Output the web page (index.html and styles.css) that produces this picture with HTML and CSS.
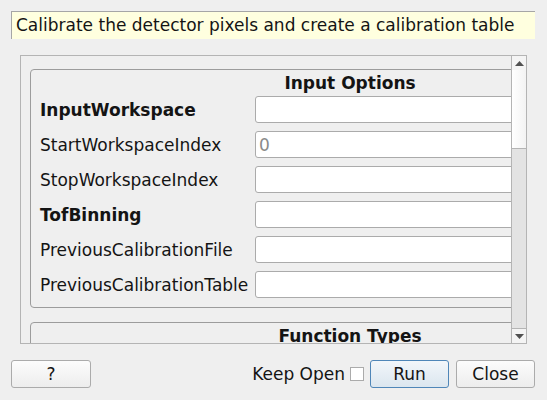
FILE: index.html
```html
<!DOCTYPE html>
<html>
<head>
<meta charset="utf-8">
<link rel="stylesheet" href="styles.css">
</head>
<body>
<div class="desc">Calibrate the detector pixels and create a calibration table</div>
<div class="scroll">
  <div class="viewport">
    <div class="content">
      <div class="group">
        <div class="group-title">Input Options</div>
        <div class="rows">
          <div class="row"><span class="label bold">InputWorkspace</span><div class="field"></div></div>
          <div class="row"><span class="label">StartWorkspaceIndex</span><div class="field"><span class="ph">0</span></div></div>
          <div class="row"><span class="label">StopWorkspaceIndex</span><div class="field"></div></div>
          <div class="row"><span class="label bold">TofBinning</span><div class="field"></div></div>
          <div class="row"><span class="label">PreviousCalibrationFile</span><div class="field"></div></div>
          <div class="row"><span class="label">PreviousCalibrationTable</span><div class="field"></div></div>
        </div>
      </div>
      <div class="group group2">
        <div class="group-title">Function Types</div>
      </div>
    </div>
  </div>
  <div class="vbar">
    <div class="arrow up"><svg width="9" height="5" viewBox="0 0 9 5"><path d="M0 5 L4.5 0 L9 5 Z" fill="#505050"/></svg></div>
    <div class="handle"></div>
    <div class="track"></div>
    <div class="arrow down"><svg width="9" height="5" viewBox="0 0 9 5"><path d="M0 0 L4.5 5 L9 0 Z" fill="#505050"/></svg></div>
  </div>
</div>
<div class="buttons">
  <button class="btn help">?</button>
  <div class="spacer"></div>
  <label class="keep">Keep Open <span class="check"></span></label>
  <button class="btn run">Run</button>
  <button class="btn close">Close</button>
</div>
</body>
</html>
```

FILE: styles.css
```css
html, body {
  margin: 0;
  padding: 0;
  background: #efefef;
  font-family: "DejaVu Sans", sans-serif;
  font-size: 17px;
  color: #141414;
  width: 547px;
  height: 400px;
  overflow: hidden;
}

.desc {
  margin: 11px 0 0 11px;
  width: 524px;
  height: 28px;
  box-sizing: border-box;
  background: #ffffdf;
  border-top: 1px solid #a6a6a6;
  border-left: 1px solid #a6a6a6;
  padding-left: 4px;
  line-height: 26px;
  white-space: nowrap;
}

.scroll {
  margin: 16px 0 0 20px;
  width: 507px;
  height: 289px;
  box-sizing: border-box;
  border: 1px solid #b4b4b4;
  display: flex;
}

.viewport {
  flex: 1;
  overflow: hidden;
  padding: 13px 0 0 9px;
}

.content {
  width: 640px;
}

.group {
  border: 1px solid #9c9c9c;
  border-radius: 4px;
  height: 239px;
  box-sizing: border-box;
  padding: 0 0 0 9px;
}

.group-title {
  font-weight: bold;
  text-align: center;
  margin-left: -9px;
  height: 26px;
  line-height: 26px;
}

.rows {
  display: flex;
  flex-direction: column;
  gap: 8px;
}

.row {
  display: flex;
  align-items: center;
  height: 27px;
}

.label {
  width: 215px;
  flex-shrink: 0;
  white-space: nowrap;
}

.bold {
  font-weight: bold;
}

.field {
  width: 400px;
  flex-shrink: 0;
  height: 27px;
  box-sizing: border-box;
  background: #ffffff;
  border: 1px solid #ababab;
  border-radius: 3px;
  display: flex;
  align-items: center;
  padding-left: 3px;
}

.ph {
  color: #8a8a8a;
}

.group2 {
  margin-top: 14px;
  height: 60px;
}

.vbar {
  width: 14px;
  border-left: 1px solid #b4b4b4;
  display: flex;
  flex-direction: column;
}

.arrow {
  height: 14px;
  display: flex;
  align-items: center;
  justify-content: center;
  background: #f4f4f4;
}

.arrow svg {
  display: block;
}

.handle {
  height: 78px;
  background: linear-gradient(to right, #ffffff, #f3f3f3);
  border-bottom: 1px solid #b4b4b4;
}

.track {
  flex: 1;
  background: #e3e3e3;
  border-bottom: 1px solid #b4b4b4;
}

.buttons {
  display: flex;
  align-items: center;
  margin: 16px 0 0 11px;
  width: 524px;
  height: 28px;
}

.spacer {
  flex: 1;
}

.btn {
  font-family: "DejaVu Sans", sans-serif;
  font-size: 17px;
  color: #141414;
  height: 28px;
  box-sizing: border-box;
  border: 1px solid #ababab;
  border-radius: 3px;
  background: linear-gradient(to bottom, #fcfcfc, #ededed);
  padding: 0;
}

.help {
  width: 80px;
}

.run {
  width: 79px;
  border-color: #4f86b8;
  background: linear-gradient(to bottom, #f2f6fa, #dbe6ef);
  margin-left: 6px;
}

.close {
  width: 79px;
  margin-left: 7px;
}

.keep {
  display: flex;
  align-items: center;
  white-space: nowrap;
}

.check {
  display: inline-block;
  width: 14px;
  height: 14px;
  box-sizing: border-box;
  border: 1px solid #ababab;
  background: #ffffff;
  margin-left: 5px;
}
```
